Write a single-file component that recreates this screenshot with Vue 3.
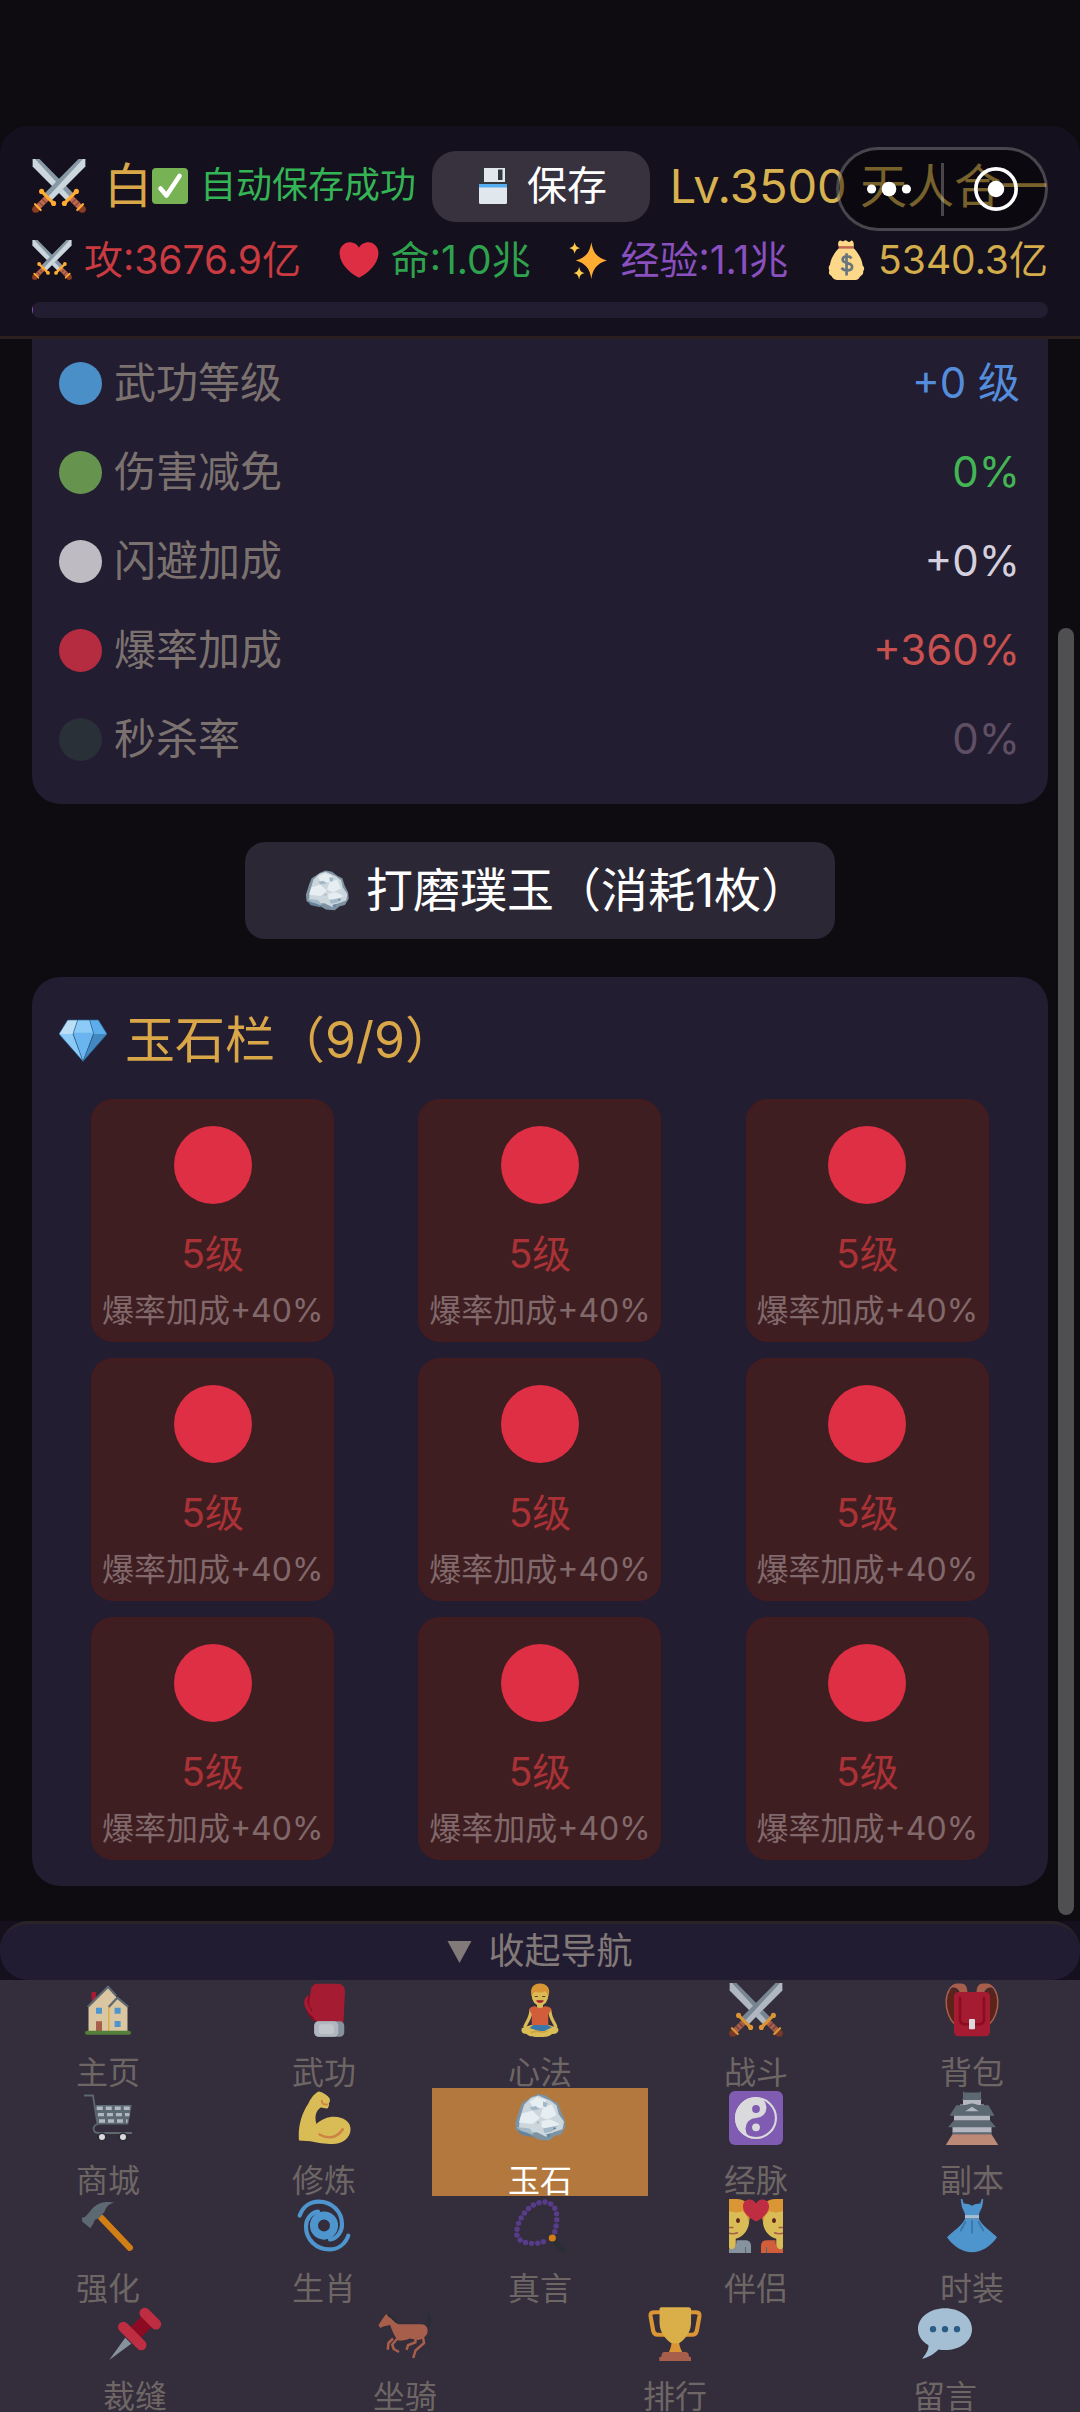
<script setup>
import { ref } from 'vue'

const resources = [
  { icon: 'swords', text: '攻:3676.9亿', tone: 'attack' },
  { icon: 'heart', text: '命:1.0兆', tone: 'life' },
  { icon: 'sparkles', text: '经验:1.1兆', tone: 'exp' },
  { icon: 'moneybag', text: '5340.3亿', tone: 'gold' },
]

const bonuses = [
  { label: '武功等级', value: '+0 级', tone: 'blue' },
  { label: '伤害减免', value: '0%', tone: 'green' },
  { label: '闪避加成', value: '+0%', tone: 'white' },
  { label: '爆率加成', value: '+360%', tone: 'red' },
  { label: '秒杀率', value: '0%', tone: 'black' },
]

const jades = Array.from({ length: 9 }, (_, id) => ({ id, level: '5级', bonus: '爆率加成+40%' }))

const navRows = [
  [
    { icon: 'home', label: '主页' },
    { icon: 'glove', label: '武功' },
    { icon: 'lotus', label: '心法' },
    { icon: 'swords', label: '战斗' },
    { icon: 'backpack', label: '背包' },
  ],
  [
    { icon: 'cart', label: '商城' },
    { icon: 'muscle', label: '修炼' },
    { icon: 'rock', label: '玉石' },
    { icon: 'yinyang', label: '经脉' },
    { icon: 'castle', label: '副本' },
  ],
  [
    { icon: 'hammer', label: '强化' },
    { icon: 'cyclone', label: '生肖' },
    { icon: 'beads', label: '真言' },
    { icon: 'couple', label: '伴侣' },
    { icon: 'dress', label: '时装' },
  ],
  [
    { icon: 'pin', label: '裁缝' },
    { icon: 'horse', label: '坐骑' },
    { icon: 'trophy', label: '排行' },
    { icon: 'speech', label: '留言' },
  ],
]

const current = ref('玉石')
const navOpen = ref(true)
</script>

<template>
  <div class="game">
    <svg class="sprites" aria-hidden="true">
      <symbol id="swords" viewBox="0 0 36 36">
        <g id="sword">
          <path fill="#8899a6" d="M0.5 0H5l23 23.400-4.600 4.600L.5 5z" />
          <path fill="#ccd6dd" d="M.5 0h1.500l23.700 25.700-2.300 2.300L.5 5z" />
          <path stroke="#c1694f" stroke-width="4" d="M26 26l6 6" />
          <path stroke="#8a4b38" stroke-width="1" d="M26.500 29.500l3-3M28.500 31.500l3-3" />
          <path stroke="#ffac33" stroke-width="2.200" d="M21.800 29.400l7.800-7.800" />
          <circle cx="21.600" cy="29.600" r="1.700" fill="#ffac33" />
          <circle cx="29.600" cy="21.600" r="1.700" fill="#ffac33" />
          <circle cx="33.500" cy="33.500" r="2.400" fill="#8a3c22" />
          <path stroke="#ffac33" stroke-width="1.500" stroke-linecap="round" d="M30.200 34l3.800-3.800" />
        </g>
        <use href="#sword" transform="matrix(-1 0 0 1 36 0)" />
      </symbol>
      <symbol id="check" viewBox="0 0 36 36">
        <rect width="36" height="36" rx="4" fill="#77b255" />
        <path d="M8.500 20.500l6 7L27.500 8" fill="none" stroke="#fff" stroke-width="4.600" stroke-linecap="round" stroke-linejoin="round" />
      </symbol>
      <symbol id="floppy" viewBox="0 0 36 36">
        <path fill="#31373d" d="M4 0h25l4 4v32H4z" />
        <path fill="#e1e8ed" d="M9 0h21v14H9z" />
        <path fill="#31373d" d="M23 1.500h4.500V12H23z" />
        <path fill="#e1e8ed" d="M4 17h28v17.500a1.500 1.500 0 0 1-1.500 1.500h-25A1.500 1.500 0 0 1 4 34.500z" />
        <path fill="#55acee" d="M4 16h28v3.500H4z" />
      </symbol>
      <symbol id="heart" viewBox="0 0 36 36">
        <path fill="#dd2e44" d="M35.500 11.500C35.500 6.500 31.500 2 26.500 2 22.500 2 19.500 4 18 7 16.500 4 13.500 2 9.500 2 4.500 2 .5 6.500.5 11.500.5 21 9 29.500 18 34c9-4.500 17.500-13 17.500-22.500z" />
      </symbol>
      <symbol id="sparkles" viewBox="0 0 36 36">
        <path fill="#ffac33" d="M21 2c1.500 9 4.500 13.500 14 16.500-9.500 3-12.500 7.500-14 16.500-1.500-9-4.500-13.500-14-16.500C16.500 15.500 19.500 11 21 2z" />
        <path fill="#ffcc4d" d="M6 2c.8 3.500 1.700 4.300 5 5.200-3.300.9-4.200 1.800-5 5.300-.8-3.500-1.700-4.400-5-5.300C4.300 6.300 5.200 5.500 6 2zM10 24c.8 3.800 1.700 4.800 5 5.700-3.300.9-4.200 2-5 5.800-.8-3.800-1.700-4.900-5-5.800 3.300-.9 4.200-1.900 5-5.700z" />
      </symbol>
      <symbol id="moneybag" viewBox="0 0 36 36">
        <path fill="#fdd888" d="M12 7C10 4 11 1 12.500.5S15 2 16 1s2-1 3 0 2 1 3.500-.2S26 3 24.500 7c4 4 8 10 8.500 16 2 2 1.500 4 .5 5 .5 3-1.500 4-3 5-1 2.500-3 3-5 3H10c-3 0-4.500-2-5-3.500C3 31.500 2 29.500 3 27.500c-1-2-.5-4 .5-5C4.500 16 8 11 12 7z" />
        <path fill="#bf6952" d="M11.500 5.500h13.500v2.300H11.500z" />
        <path fill="none" stroke="#67757f" stroke-width="2.400" d="M23 16.500c-2-2.500-8-2.500-8 1.300 0 4 8.500 2 8.500 6.200 0 4-7 4.500-9.500 1M18.500 12v20" />
      </symbol>
      <symbol id="rock" viewBox="0 0 36 36">
        <path fill="#7d93a3" d="M13 3.500l4-1.500 5 1 4 3 4 2 2 6 2.500 5 .5 5-3 5-4 1-4 3-7-.5-4-2.500-6-1-5-3-.5-5L4 13l2-5z" />
        <path fill="#ccd6dd" d="M12 4.500l5-1.500 8 3.500 4 3 1.500 6 3.500 5-1 5-6 2-5 3-6-3-7 .5-5-3.500.5-6L7.500 9z" />
        <path fill="#e6eef2" d="M11 7l5-3 6 2-2 5-6 1zM20 11l6-2 3 7-6 3-5-2zM6 15l7-2 5 5-5 4-9-1zM19 20l6-1 6 3-6 4-6-2z" />
        <path fill="#a3b8c7" d="M11 11l4-1 3 2-5 1zM20 7l3 1-1 3-2-1zM2.500 24l8.500 1 3 4-7-1zM20 25l10-2-4 4-5 1zM16 20l2 1-2 1z" />
        <path fill="#66839b" d="M3 26l7 2 4 3-5-1-4-1zM22 29l4-1-2 3zM27 24l2 1-2 1z" />
      </symbol>
      <symbol id="gem" viewBox="0 0 36 36">
        <path fill="#bddff6" d="M6.500 3H14l-3.500 10.500H0z" />
        <path fill="#8ccaf7" d="M14 3h9l3 10.500H10.500z" />
        <path fill="#5dadec" d="M23 3h6.500L36 13.500H26z" />
        <path fill="#6ab5f0" d="M10.500 12.500h15.500L18 34z" />
        <path fill="#8ccaf7" d="M0 13.500h10.500L18 34z" />
        <path fill="#4289c1" d="M26 13.500h10L18 34z" />
        <path fill="none" stroke="#2a6797" stroke-width=".5" d="M14 3l-3.500 10.500L18 34l8-20.500L23 3M6.500 3h23L36 13.500 18 34 0 13.500z" />
      </symbol>
      <symbol id="home" viewBox="0 0 36 36">
        <path fill="#be1931" d="M7 6h3v7H7z" />
        <path fill="#ffe8b6" d="M5 15L18 2.500l6.500 8L31 15v17H5z" />
        <path fill="#ffcc4d" d="M18 15h1v17h-1z" />
        <path fill="none" stroke="#66757f" stroke-width="1.500" stroke-linejoin="round" d="M4.500 16L18 2.500l5.500 6M18.500 16L24.200 9.800 31.500 16" />
        <path fill="#55acee" d="M10 16.500h4v4h-4zM22.400 16.500h4v4h-4zM22.400 25.300h4v4h-4z" />
        <path fill="#c1694f" d="M10 25.500h4V32h-4z" />
        <rect x="2.700" y="31.800" width="30.600" height="2.700" rx="1.300" fill="#5c913b" />
      </symbol>
      <symbol id="glove" viewBox="0 0 36 36">
        <path fill="#a0041e" d="M5 13c0-3 2-5 5-5l4 12-2 6C8 23 5 17 5 13z" />
        <path fill="#be1931" d="M13.500.5H27c3 0 5 2 5 5L31 26H13.500C11 24 9.500 21 10 17c-1 1-2.500-3-1.500-7L9 6c.3-3 1.500-5.500 4.500-5.500zM4.800 13c0-2 1-4 3-5l-1 4c0 3 4 8 4.500 11C8.500 21 5 17 4.800 13z" />
        <rect x="11.500" y="25.500" width="20" height="10.300" rx="3" fill="#99aab5" />
        <rect x="11.500" y="25.500" width="16" height="10.300" rx="3" fill="#ccd6dd" />
        <rect x="14.500" y="27.500" width="10" height="6.500" rx="2" fill="#e1e8ed" />
      </symbol>
      <symbol id="lotus" viewBox="0 0 36 36">
        <path fill="none" stroke="#ffdc5d" stroke-width="2.200" stroke-linecap="round" d="M12 18c0 5-2.500 7-4 11M24.500 18c0 5 2.500 7 4 11" />
        <path fill="#ffdc5d" d="M16 13h4v5h-4z" />
        <path fill="#f4683a" d="M11 18c0-2 2-2.500 4-2.500 1.500 1.500 4.500 1.500 6 0 2 0 4.500.5 4.500 2.500l-2 3v8h-11v-8z" />
        <path fill="#ffdc5d" d="M12 28h12l6 2c1 3-1 4-4 4-2 2-5 2-8 2-4 0-7 0-9-2-3 0-4-2-3-4z" />
        <path fill="#3b88c3" d="M13.500 28h9.500l3 1.500-5 2.500c-2 0-4 0-5.500-.5L11 30z" />
        <path fill="none" stroke="#eeb73f" d="M12 33c5-2 8 1 11-1" />
        <ellipse cx="18" cy="8.500" rx="5.500" ry="6.500" fill="#ffdc5d" />
        <path fill="#ffac33" d="M12.500 9c-1.500-5 .5-8.700 5.500-8.700S25.500 4 23.500 9c-.5-1-1-3-2-3.500-2 1-5 1-7 .5-1.500 1-1.500 2-2 3z" />
        <path stroke="#662113" stroke-width=".6" d="M14.500 9h2M19.500 9h2" />
        <path fill="#be1931" d="M15.500 11.500h5c-.5 2.300-4.500 2.300-5 0z" />
      </symbol>
      <symbol id="backpack" viewBox="0 0 36 36">
        <path fill="#662113" d="M8 4C4 2 1 8 1 15c0 6 3 11 6 13zM28 4c4-2 7 4 7 11 0 6-3 11-6 13z" />
        <path fill="none" stroke="#c1694f" stroke-width="1" d="M6 27C3 24 .5 18 .8 12S4 1 8 .8M30 27c3-3 5.500-9 5.200-15S32 1 28 .8" />
        <path fill="#c1694f" d="M3 4c2-4 6-4 9-3.500 2 .5 3 3 3 6h-5C9 3 5 2 3 4zM33 4c-2-4-6-4-9-3.500-2 .5-3 3-3 6h5c1-3.500 5-4.500 7-2.500z" />
        <rect x="6" y="6" width="24" height="29.500" rx="3" fill="#be1931" />
        <path fill="none" stroke="#a0041e" stroke-width="1.800" stroke-linecap="round" d="M10 10v14c0 2 1 3.500 3.500 3.500h9c2.500 0 3.500-1.500 3.500-3.500V10" />
        <rect x="16" y="24" width="4" height="6.800" rx=".6" fill="#fff" />
      </symbol>
      <symbol id="cart" viewBox="0 0 36 36">
        <path fill="none" stroke="#66757f" stroke-width="1.200" d="M2 3h6l3 19c-2.500 1-3.500 3-2 5 .5.8 1.500 1 3 1h22" />
        <path fill="#66757f" d="M9.800 9.300h24L31.500 22.300H11z" />
        <path stroke="#ccd6dd" stroke-width="2.200" stroke-dasharray="4 2" d="M10.500 11.500h22M11.300 15.800h21M12 20h19" />
        <circle cx="14" cy="30.600" r="3" fill="#292f33" /><circle cx="28" cy="30.600" r="3" fill="#292f33" />
        <circle cx="14" cy="30.600" r="2" fill="#fff" /><circle cx="28" cy="30.600" r="2" fill="#fff" />
      </symbol>
      <symbol id="muscle" viewBox="0 0 36 36">
        <path fill="#ffdc5d" d="M1.300 33C.5 24 3 15 7.500 8.500 9 5 12 1 14.700.3c3 .7 5.500 2.500 7 4.500.5 1.500.3 2.500-.5 3.500.3 1 0 2.500-1 3.300-1.500.3-3-.8-4.400-.6-3.300 2-4.300 7-2.800 11 3-3 7.500-4.800 11.700-4.800 6.300 0 11 3.300 11 8.300 0 6-5.500 9.800-12 9.800-4.700 0-10.700-.8-14.700-1.800z" />
        <path fill="none" stroke="#ef9645" stroke-width="1.700" stroke-linecap="round" d="M15 29c6 3.500 12 2 15.500-3.500" />
        <path fill="none" stroke="#ef9645" stroke-width="1.200" stroke-linecap="round" d="M16.500 6.500c0 2.500 1.500 2.500 3.500 2.500" />
      </symbol>
      <symbol id="yinyang" viewBox="0 0 36 36">
        <rect width="36" height="36" rx="4" fill="#9266cc" />
        <circle cx="18" cy="18" r="13.300" fill="none" stroke="#fff" stroke-width="1.400" />
        <path fill="#fff" d="M18 4a14 14 0 0 0 0 28 7 7 0 0 1 0-14 6 6 0 0 0 0-14z" />
        <circle cx="18" cy="12" r="2.600" fill="#9266cc" /><circle cx="18" cy="24.200" r="2.600" fill="#fff" />
      </symbol>
      <symbol id="castle" viewBox="0 0 36 36">
        <path fill="#d1d5dd" d="M12 5h12v4h2v3H10V9h2zM6 16h24v4H6zM5 23h26v5H5z" />
        <path fill="#66757f" d="M12 0l1 1h10l1-1v5l1 1H11l1-1zM10 9.500l3-.2c2 0 3-1 5-1s3 1 5 1l6 .2L33 16.500H3L7.500 9.500zM6 19.500h24l4 4.700H2zM5 27.500h26v1.500H5z" />
        <path fill="#ccd6dd" d="M13.500 13.500L18 10.500l4.500 3z" />
        <path fill="#d99e82" d="M5 28.800h26L35.500 36H.5z" />
      </symbol>
      <symbol id="hammer" viewBox="0 0 36 36">
        <path stroke="#f4900c" stroke-width="4.200" stroke-linecap="round" d="M13.500 12.500L32.500 32.500" />
        <path fill="#66757f" d="M.6 12.500l2-.5C6 9 8 3.500 14.500 2.300c3-.6 6-.3 7.700.2-3 .5-5.500 2.500-6.500 6l-3.500 4-3 1.500-1 2.500-2 3L.8 15z" />
      </symbol>
      <symbol id="cyclone" viewBox="0 0 36 36">
        <circle cx="18" cy="17.700" r="6.700" fill="none" stroke="#55acee" stroke-width="5.400" />
        <path id="cyclone-arm" fill="none" stroke="#55acee" stroke-width="2.800" stroke-linecap="round" d="M1.800 11C4 5 9 1.800 14.500 1.800 23 1.800 30 8 30 17c0 5-3.500 9.500-8 10" />
        <use href="#cyclone-arm" transform="rotate(180 18 17.700)" />
      </symbol>
      <symbol id="beads" viewBox="0 0 36 36">
        <path fill="none" stroke="#62409b" stroke-width="3.600" stroke-linecap="round" stroke-dasharray="0 4" d="M27.800 21.800C30 14 31 3 21 2 11 2 3 13 2.500 22c-.5 6 6 8 12 7.500 4 0 6-1 9-2.500" />
        <path stroke="#292f33" stroke-width="3.600" stroke-linecap="round" d="M28 28.500l5.500 5.500" />
        <circle cx="26.200" cy="26" r="2.400" fill="#f4900c" />
      </symbol>
      <symbol id="couple" viewBox="0 0 36 36">
        <g id="partner">
          <path fill="#ffdc5d" d="M0 4c7-3 13.500 2 13.500 10C13.500 20 10 25 4.500 26.500V32c0 2-4.500 3-4.500 0z" />
          <path fill="#ffac33" d="M0 0h5c6 0 9 4 9 8 0 3 0 5-1 8 0-4-2-6-4-8-3 1.500-6 1-9 0z" />
          <ellipse cx="6" cy="14.300" rx="1.300" ry="1.700" fill="#662113" />
          <path stroke="#c1694f" stroke-width="1.100" d="M0 19h3M0 22.800c2 .6 4 .4 6-.3" />
        </g>
        <use href="#partner" transform="matrix(-1 0 0 1 36 0)" />
        <path fill="#99aab5" d="M0 33c2 1.500 5 0 5-5.500h6c2.500 0 3.700 1.500 3.700 4V36H0z" />
        <path fill="#f4683a" d="M36 33c-2 1.500-5 0-5-5.500h-6c-2.500 0-3.700 1.500-3.700 4V36H36z" />
        <path stroke="#66757f" stroke-width=".7" d="M11 32v4M25 32v4" />
        <path fill="#dd2e44" d="M18 3c2-4 8.700-3.500 8.700 2 0 4-4 7.700-8.700 10-4.700-2.300-8.700-6-8.700-10C9.300-.5 16-1 18 3z" />
      </symbol>
      <symbol id="dress" viewBox="0 0 36 36">
        <path fill="#55acee" d="M10.500 0h1l1 3c2 0 4 .5 5.500 1.500C19.500 3.500 21.500 3 23.500 3l1-3h1l-.5 4c-.5 3-2 4-2.500 7h-9c-.5-3-2-4-2.500-7zM13.500 13h9C25 18 30 21 34.700 25.500 30 32 24 35.500 18 35.500S6 32 1.300 25.500C6 21 11 18 13.500 13z" />
        <path fill="#bddff6" d="M13.300 10.700h9.400v2.300h-9.400z" />
        <path stroke="#3b88c3" stroke-width="1.200" stroke-linecap="round" d="M18 14.500v8M13.500 15.500L10.500 21M22.500 15.500l3 5.500" />
      </symbol>
      <symbol id="pin" viewBox="0 0 36 36">
        <path fill="#99aab5" d="M.8 35.300L11.500 20.500l4 4z" />
        <path stroke="#a0041e" stroke-width="10" d="M16 19.500L28 7.500" />
        <path stroke="#dd2e44" stroke-width="7" stroke-linecap="round" d="M10.200 13.300l12 12M24.500 4l7.500 7.500" />
      </symbol>
      <symbol id="horse" viewBox="0 0 36 36">
        <path fill="none" stroke="#292f33" stroke-width="2.200" stroke-linecap="round" d="M33.500 12c2-3 .5-5 0-7M5 5.500c4 0 5 3 8 6" />
        <path fill="#c1694f" d="M.3 12L4 6.500l1.500-2 1.500 2C10 8 11 11 14 11.500h15c3 0 4.500 2.500 4 5.500-.5 2-2 3-3 4l-3 1-6-1c-3 1.500-5 1.300-7 1.500-3-2-4.500-7-6-10.500L3.500 13 1.500 14z" />
        <path fill="none" stroke="#c1694f" stroke-width="1.700" stroke-linejoin="round" d="M10 21l-3 3-.5 4.500M13 21l-3.500 4 1 3 3.500 2M29.500 18l1.200 6-5.700 5-1.500 5M25 20v3.500l-5 2-1 3" />
      </symbol>
      <symbol id="trophy" viewBox="0 0 36 36">
        <path fill="none" stroke="#ffac33" stroke-width="2.800" d="M9 3.500H4.500C2.500 3.500 1.500 4 1.700 6l1.800 10c.5 2 1.500 2.500 3 2.500h5M27 3.500h4.500c2 0 3 .5 2.800 2.500l-1.800 10c-.5 2-1.500 2.500-3 2.500h-5" />
        <path fill="#ffac33" d="M16 20h4.500c0 5 1 8 3 11h-10c1.500-3 2.500-6 2.500-11z" />
        <path fill="#ffcc4d" d="M9 .2h18c1 0 1.700.6 1.700 1.500v9c0 6-4 11-8 13.500h-5c-4-2.500-8-7.500-8-13.500v-9C7.700.8 8 .2 9 .2z" />
        <path fill="#c1694f" d="M11 30h14c1.500 0 2.300 1 2.300 3l1.400.5V36H7.500v-2.500L9 33c0-2 .5-3 2-3z" />
      </symbol>
      <symbol id="speech" viewBox="0 0 36 36">
        <path fill="#bddff6" d="M18 .8c10 0 18 6 18 14S28 28.700 18 28.700c-1.500 0-3 0-4.400-.3-3 3-7 5.600-10.800 6.100C5 31.500 7 29 7 25.500 2.500 23 0 19 0 14.800 0 6.800 8 .8 18 .8z" />
        <g fill="#2a6797"><circle cx="10" cy="14.800" r="2.100" /><circle cx="18" cy="14.800" r="2.100" /><circle cx="26" cy="14.800" r="2.100" /></g>
      </symbol>
    </svg>

    <header class="topbar">
      <div class="identity">
        <svg class="icon-lg"><use href="#swords" /></svg>
        <span class="hero">白</span>
        <span class="toast" role="status"><svg class="icon-sm"><use href="#check" /></svg>自动保存成功</span>
        <button class="save" type="button"><svg class="icon-sm"><use href="#floppy" /></svg>保存</button>
        <span class="level">Lv.3500 天人合一</span>
      </div>
      <div class="resources">
        <span v-for="r in resources" :key="r.icon" class="resource" :class="r.tone">
          <svg class="icon-md"><use :href="'#' + r.icon" /></svg>{{ r.text }}
        </span>
      </div>
      <div class="progress"><div class="progress-fill"></div></div>
      <div class="capsule">
        <button type="button" aria-label="更多">
          <svg viewBox="0 0 48 48" fill="#fff"><circle cx="5" cy="24" r="5" /><circle cx="24" cy="24" r="8" /><circle cx="43" cy="24" r="5" /></svg>
        </button>
        <i class="divider"></i>
        <button type="button" aria-label="关闭">
          <svg viewBox="0 0 48 48"><circle cx="24" cy="24" r="22" fill="none" stroke="#fff" stroke-width="4" /><circle cx="24" cy="24" r="9" fill="#fff" /></svg>
        </button>
      </div>
    </header>

    <main class="content">
      <dl class="panel bonuses">
        <div v-for="b in bonuses" :key="b.label" class="bonus" :class="b.tone">
          <dt><i class="dot"></i>{{ b.label }}</dt>
          <dd>{{ b.value }}</dd>
        </div>
      </dl>

      <button class="polish" type="button"><svg class="icon-rock"><use href="#rock" /></svg>打磨璞玉（消耗1枚）</button>

      <section class="panel jades">
        <h2><svg class="icon-gem"><use href="#gem" /></svg>玉石栏（9/9）</h2>
        <div class="grid">
          <article v-for="j in jades" :key="j.id" class="jade">
            <i class="orb"></i>
            <span class="grade">{{ j.level }}</span>
            <span class="effect">{{ j.bonus }}</span>
          </article>
        </div>
      </section>
      <div class="scrollbar"></div>
    </main>

    <footer class="bottom">
      <button class="toggle" type="button" :aria-expanded="navOpen" @click="navOpen = !navOpen">
        <svg class="caret" viewBox="0 0 24 22"><path d="M0 0h24L12 22z" fill="currentColor" /></svg>{{ navOpen ? '收起导航' : '展开导航' }}
      </button>
      <nav v-if="navOpen" class="nav">
        <div v-for="(row, i) in navRows" :key="i" class="nav-row">
          <button
            v-for="n in row"
            :key="n.label"
            type="button"
            class="nav-item"
            :class="{ active: n.label === current }"
            @click="current = n.label"
          >
            <svg class="icon-lg"><use :href="'#' + n.icon" /></svg>
            <span>{{ n.label }}</span>
          </button>
        </div>
      </nav>
    </footer>
  </div>
</template>

<style>
body {
  background: #0e0b11;
}
</style>

<style scoped>
.game {
  display: flex;
  flex-direction: column;
  box-sizing: border-box;
  min-height: 100vh;
  padding-top: 126px;
  background: #0e0b11;
  font-family: Inter, "Noto Sans CJK SC", sans-serif;
  line-height: 1.2;
  white-space: nowrap;
}

button {
  padding: 0;
  border: 0;
  background: none;
  color: inherit;
  font: inherit;
}

svg {
  display: block;
  flex: none;
}

.sprites {
  position: absolute;
  width: 0;
  height: 0;
}

.icon-lg { width: 54px; height: 54px; }
.icon-md { width: 40px; height: 40px; }
.icon-sm { width: 36px; height: 36px; }
.icon-rock { width: 46px; height: 46px; }
.icon-gem { width: 48px; height: 48px; }

.topbar {
  position: relative;
  padding: 24px 32px 18px;
  border-bottom: 3px solid #29201f;
  border-radius: 28px 28px 0 0;
  background: #14101d;
}

.identity {
  display: flex;
  align-items: center;
  height: 72px;
}

.hero {
  margin-left: 18px;
  color: #d9a648;
  font-size: 48px;
}

.toast {
  display: flex;
  align-items: center;
  gap: 12px;
  color: #35b455;
  font-size: 36px;
}

.save {
  display: flex;
  align-items: center;
  justify-content: center;
  gap: 16px;
  width: 218px;
  height: 71px;
  margin-left: 16px;
  border-radius: 24px;
  background: #38323f;
  color: #fff;
  font-size: 40px;
}

.level {
  margin-left: auto;
  color: #d9b250;
  font-size: 47px;
}

.resources {
  display: flex;
  justify-content: space-between;
  align-items: center;
  height: 60px;
  margin: 8px 0 12px;
  font-size: 39px;
}

.resource {
  display: flex;
  align-items: center;
  gap: 12px;
}

.attack { color: #c93b40; }
.life { color: #2fa24d; }
.exp { color: #8a50c0; }
.gold { color: #d3ac4c; }

.progress {
  height: 16px;
  overflow: hidden;
  border-radius: 8px;
  background: #221d30;
}

.progress-fill {
  width: 1px;
  height: 100%;
  background: #8a50c0;
}

.capsule {
  position: absolute;
  top: 21px;
  right: 32px;
  display: flex;
  align-items: center;
  justify-content: center;
  gap: 30px;
  box-sizing: border-box;
  width: 212px;
  height: 84px;
  border: 3px solid rgba(255, 255, 255, 0.25);
  border-radius: 42px;
  background: rgba(0, 0, 0, 0.45);
}

.capsule svg {
  width: 44px;
  height: 44px;
}

.divider {
  width: 3px;
  height: 53px;
  background: rgba(255, 255, 255, 0.25);
}

.content {
  position: relative;
  display: flex;
  flex: 1;
  flex-direction: column;
  align-items: center;
  gap: 38px;
  padding: 0 32px 35px;
}

.panel {
  box-sizing: border-box;
  width: 100%;
  margin: 0;
  border-radius: 28px;
  background: #221d30;
}

.bonuses {
  padding: 0 28px 20px 27px;
  border-radius: 0 0 28px 28px;
}

.bonus {
  display: flex;
  align-items: center;
  justify-content: space-between;
  height: 89px;
  font-size: 42px;
}

.bonus dt {
  display: flex;
  align-items: center;
  gap: 12px;
  color: #7b7270;
}

.bonus dd {
  margin: 0;
}

.dot {
  width: 43px;
  height: 43px;
  border-radius: 50%;
}

.blue dd { color: #558ddd; }
.green dd { color: #42b654; }
.white dd { color: #d5d0de; }
.red dd { color: #c8504f; }
.black dd { color: #5f4f64; }
.blue .dot { background: #4b8fc8; }
.green .dot { background: #66944f; }
.white .dot { background: #bebcc2; }
.red .dot { background: #b52c41; }
.black .dot { background: #2a3037; }

.polish {
  display: flex;
  align-items: center;
  justify-content: center;
  gap: 16px;
  box-sizing: border-box;
  width: 590px;
  height: 97px;
  padding-left: 32px;
  border-radius: 20px;
  background: #2b2734;
  color: #fff;
  font-size: 47px;
}

.jades {
  padding: 26px 25px;
}

h2 {
  display: flex;
  align-items: center;
  gap: 18px;
  height: 74px;
  margin: 0 0 22px;
  padding-left: 2px;
  color: #d9a648;
  font-size: 50px;
  font-weight: 400;
}

.grid {
  display: grid;
  grid-template-columns: repeat(3, 1fr);
  gap: 16px;
  justify-items: center;
}

.jade {
  display: flex;
  flex-direction: column;
  align-items: center;
  box-sizing: border-box;
  width: 243px;
  height: 243px;
  padding-top: 24px;
  border: 3px solid #431c20;
  border-radius: 22px;
  background: #3f1e21;
}

.orb {
  width: 78px;
  height: 78px;
  border-radius: 50%;
  background: #df2f45;
}

.grade {
  margin-top: 20px;
  color: #aa3236;
  font-size: 39px;
  line-height: 60px;
}

.effect {
  color: #81696b;
  font-size: 32px;
  line-height: 54px;
}

.scrollbar {
  position: absolute;
  top: 289px;
  right: 6px;
  bottom: 6px;
  width: 16px;
  border-radius: 8px;
  background: #4f4e51;
}

.bottom {
  background: #15101e;
}

.toggle {
  display: flex;
  align-items: center;
  justify-content: center;
  gap: 16px;
  box-sizing: border-box;
  width: 100%;
  height: 59px;
  border-top: 3px solid #2b2328;
  border-radius: 28px;
  background: #221c32;
  color: #827a78;
  font-size: 36px;
}

.caret {
  width: 25px;
  height: 22px;
}

.nav {
  background: #332d3c;
}

.nav-row {
  display: flex;
}

.nav-item {
  display: flex;
  flex: 1;
  flex-direction: column;
  align-items: center;
  gap: 18px;
  box-sizing: border-box;
  height: 108px;
  padding-top: 3px;
  color: #6e6664;
  font-size: 32px;
  line-height: 36px;
}

.nav-item svg {
  opacity: 0.82;
}

.nav-item.active {
  background: #b3783d;
  color: #fff;
}

.nav-item.active svg {
  opacity: 1;
}
</style>
